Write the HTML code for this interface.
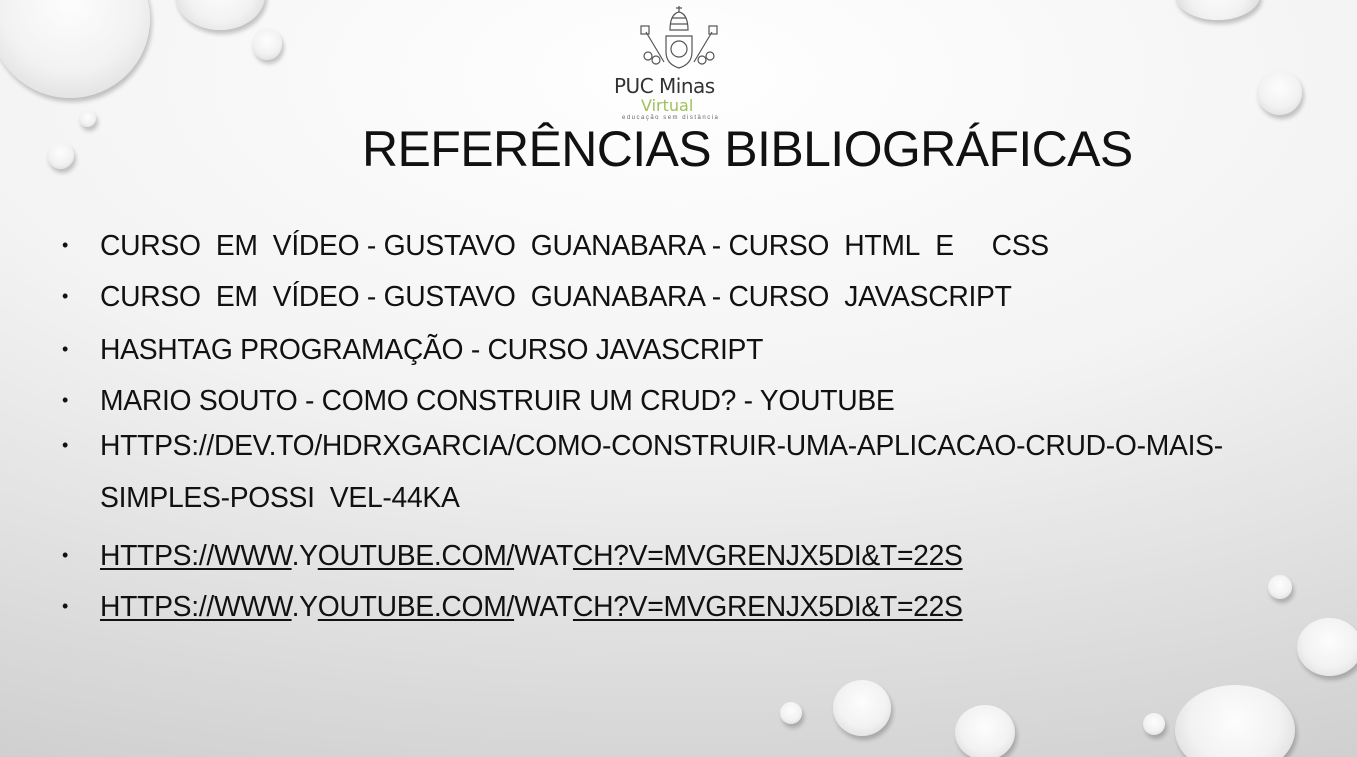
<!DOCTYPE html>
<html><head><meta charset="utf-8"><style>
html,body{margin:0;width:1357px;height:757px;overflow:hidden}
body{position:relative;font-family:"Liberation Sans",sans-serif;
background:radial-gradient(ellipse 120% 100% at 50% 10%,#ffffff 0%,#f3f3f3 45%,#dcdcdc 80%,#cfcfcf 100%);}
.d{position:absolute;border-radius:50%;background:radial-gradient(circle at 50% 40%,#fdfdfd 0%,#f2f2f2 55%,#e0e0e0 82%,#f8f8f8 100%);box-shadow:2px 4px 4px rgba(0,0,0,.22);}
.t{position:absolute;left:362px;top:120px;font-size:50px;letter-spacing:-0.6px;color:#111;}
ul{position:absolute;left:62px;top:0;margin:0;padding:0;list-style:none;font-size:28.3px;color:#111;letter-spacing:-0.3px}
li{position:absolute;left:0;white-space:nowrap}
li.b::before{content:"•";position:absolute;left:0;font-size:18px;top:6px}
li span{position:absolute;left:38px}
u{text-decoration-thickness:2px;text-underline-offset:3px}
</style></head><body>
<div class="d" style="left:-10px;top:-60px;width:160px;height:158px"></div>
<div class="d" style="left:175px;top:-40px;width:90px;height:70px"></div>
<div class="d" style="left:252px;top:28px;width:30px;height:32px"></div>
<div class="d" style="left:79px;top:110px;width:17px;height:17px"></div>
<div class="d" style="left:47px;top:142px;width:27px;height:27px"></div>
<div class="d" style="left:1175px;top:-30px;width:85px;height:50px"></div>
<div class="d" style="left:1257px;top:70px;width:45px;height:45px"></div>
<div class="d" style="left:1268px;top:575px;width:24px;height:24px"></div>
<div class="d" style="left:1297px;top:618px;width:65px;height:58px"></div>
<div class="d" style="left:1175px;top:685px;width:120px;height:90px"></div>
<div class="d" style="left:1143px;top:713px;width:22px;height:22px"></div>
<div class="d" style="left:955px;top:705px;width:60px;height:55px"></div>
<div class="d" style="left:833px;top:680px;width:58px;height:56px"></div>
<div class="d" style="left:780px;top:702px;width:22px;height:22px"></div>
<svg style="position:absolute;left:636px;top:4px" width="86" height="70" viewBox="0 0 86 70" fill="none" stroke="#555" stroke-width="1.2">
<path d="M34 26 Q34 10 43 8 Q52 10 52 26 Z"/><path d="M43 2v6M40 4h6"/><path d="M36 14h14M35 20h16"/>
<path d="M30 32 H56 V48 Q56 60 43 64 Q30 60 30 48 Z"/><circle cx="43" cy="45" r="8"/>
<path d="M10 28 L28 58 M76 28 L58 58"/><circle cx="12" cy="52" r="4"/><circle cx="20" cy="56" r="4"/><circle cx="74" cy="52" r="4"/><circle cx="66" cy="56" r="4"/>
<rect x="5" y="22" width="8" height="8"/><rect x="73" y="22" width="8" height="8"/></svg>
<div style="position:absolute;left:614px;top:74px;font-size:20px;color:#333;font-family:'DejaVu Sans',sans-serif;letter-spacing:-0.5px">PUC Minas</div>
<div style="position:absolute;left:641px;top:96px;font-size:16px;color:#9fc05a;font-family:'DejaVu Sans',sans-serif">Virtual</div>
<div style="position:absolute;left:622px;top:115px;font-size:6px;color:#666;letter-spacing:1.5px">educação sem distância</div>
<div class="t">REFERÊNCIAS BIBLIOGRÁFICAS</div>
<ul>
<li class="b" style="top:229px"><span>CURSO&nbsp; EM&nbsp; VÍDEO - GUSTAVO&nbsp; GUANABARA - CURSO&nbsp; HTML&nbsp; E&nbsp;&nbsp;&nbsp;&nbsp; CSS</span></li>
<li class="b" style="top:280px"><span>CURSO&nbsp; EM&nbsp; VÍDEO - GUSTAVO&nbsp; GUANABARA - CURSO&nbsp; JAVASCRIPT</span></li>
<li class="b" style="top:333px"><span>HASHTAG PROGRAMAÇÃO - CURSO JAVASCRIPT</span></li>
<li class="b" style="top:384px"><span>MARIO SOUTO - COMO CONSTRUIR UM CRUD? - YOUTUBE</span></li>
<li class="b" style="top:429px"><span>HTTPS://DEV.TO/HDRXGARCIA/COMO-CONSTRUIR-UMA-APLICACAO-CRUD-O-MAIS-</span></li>
<li style="top:481px;left:38px">SIMPLES-POSSI&nbsp; VEL-44KA</li>
<li class="b" style="top:539px"><span><u>HTTPS://WWW</u>.Y<u>OUTUBE.COM/</u>WAT<u>CH?V=MVGRENJX5DI&amp;T=22S</u></span></li>
<li class="b" style="top:590px"><span><u>HTTPS://WWW</u>.Y<u>OUTUBE.COM/</u>WAT<u>CH?V=MVGRENJX5DI&amp;T=22S</u></span></li>
</ul>
</body></html>
